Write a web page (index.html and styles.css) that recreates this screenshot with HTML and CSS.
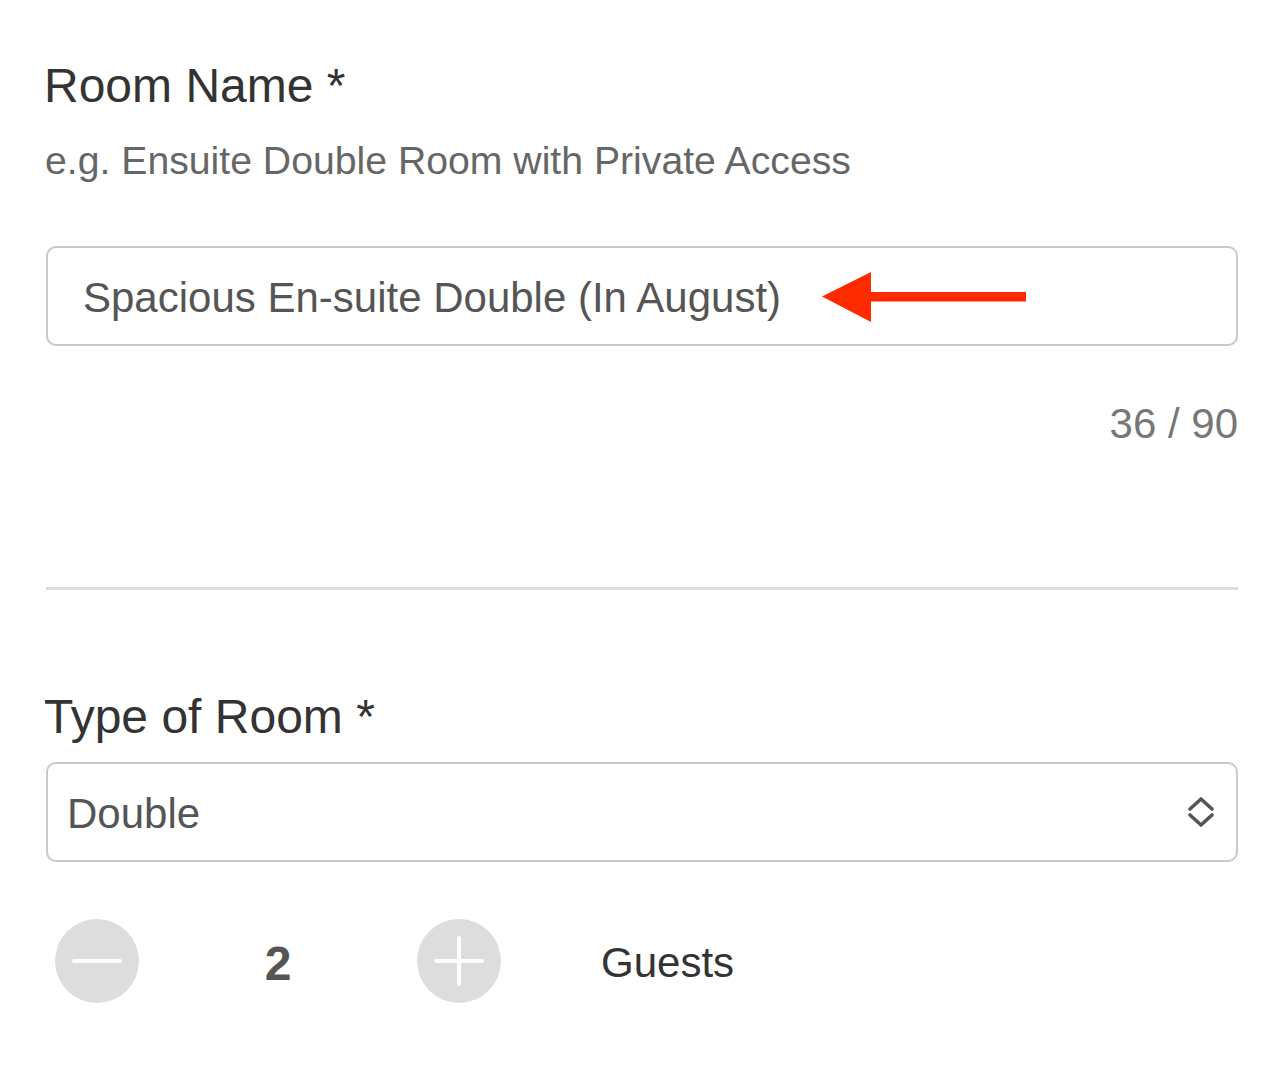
FILE: index.html
```html
<!DOCTYPE html>
<html lang="en">
<head>
<meta charset="utf-8">
<title>Room form</title>
<link rel="stylesheet" href="styles.css">
</head>
<body>
<main class="form">
  <section class="field">
    <div class="label">Room Name *</div>
    <div class="hint">e.g. Ensuite Double Room with Private Access</div>
    <div class="input-wrap">
      <div class="input">Spacious En-suite Double (In August)</div>
      <svg class="arrow" width="204" height="50" viewBox="0 0 204 50" aria-hidden="true">
        <polygon points="0,24.5 49,0 49,50" fill="#ff2a00"/>
        <rect x="48" y="20" width="156" height="9.5" fill="#ff2a00"/>
      </svg>
    </div>
    <div class="counter">36 / 90</div>
  </section>

  <hr class="divider">

  <section class="field">
    <div class="label label-type">Type of Room *</div>
    <div class="select">
      <span class="select-value">Double</span>
      <svg class="chevrons" width="28" height="32" viewBox="0 0 28 32" aria-hidden="true">
        <polyline points="3,13 14,3 25,13" fill="none" stroke="#555" stroke-width="3.6" stroke-linecap="round" stroke-linejoin="round"/>
        <polyline points="3,19 14,29 25,19" fill="none" stroke="#555" stroke-width="3.6" stroke-linecap="round" stroke-linejoin="round"/>
      </svg>
    </div>
    <div class="stepper">
      <div class="step-btn">
        <svg width="84" height="84" viewBox="0 0 84 84" aria-hidden="true">
          <line x1="19" y1="42" x2="65" y2="42" stroke="#fff" stroke-width="4" stroke-linecap="round"/>
        </svg>
      </div>
      <div class="step-value">2</div>
      <div class="step-btn">
        <svg width="84" height="84" viewBox="0 0 84 84" aria-hidden="true">
          <line x1="19" y1="42" x2="65" y2="42" stroke="#fff" stroke-width="4" stroke-linecap="round"/>
          <line x1="42" y1="19" x2="42" y2="65" stroke="#fff" stroke-width="4" stroke-linecap="round"/>
        </svg>
      </div>
      <div class="step-label">Guests</div>
    </div>
  </section>
</main>
</body>
</html>
```

FILE: styles.css
```css
html, body {
  margin: 0;
  padding: 0;
  background: #ffffff;
}

body {
  font-family: "Liberation Sans", Arial, Helvetica, sans-serif;
  color: #333;
}

.form {
  width: 1192px;
  padding: 58px 0 0 46px;
}

.field {
  display: flex;
  flex-direction: column;
}

.label {
  font-size: 48px;
  line-height: 56px;
  color: #333;
  margin-left: -2px;
}

.hint {
  font-size: 39.2px;
  line-height: 46px;
  color: #666;
  margin-top: 24px;
  margin-left: -1px;
}

.input-wrap {
  position: relative;
  margin-top: 62px;
}

.input {
  box-sizing: border-box;
  height: 100px;
  border: 2px solid #c9c9c9;
  border-radius: 10px;
  padding: 4px 0 0 35px;
  display: flex;
  align-items: center;
  font-size: 42px;
  color: #555;
}

.arrow {
  position: absolute;
  left: 776px;
  top: 26px;
}

.counter {
  align-self: flex-end;
  font-size: 42px;
  line-height: 50px;
  color: #777;
  margin-top: 53px;
}

.divider {
  border: 0;
  height: 3px;
  background: #dddddd;
  margin: 138px 0 0 0;
}

.label-type {
  margin-top: 99px;
}

.select {
  box-sizing: border-box;
  height: 100px;
  margin-top: 17px;
  border: 2px solid #c9c9c9;
  border-radius: 10px;
  padding: 0 21px 0 19px;
  display: flex;
  align-items: center;
  justify-content: space-between;
}

.select-value {
  font-size: 42px;
  color: #555;
  padding-top: 4px;
}

.chevrons {
  display: block;
}

.stepper {
  display: flex;
  align-items: center;
  margin-top: 57px;
  padding-left: 9px;
}

.step-btn {
  width: 84px;
  height: 84px;
  border-radius: 50%;
  background: #dddddd;
}

.step-btn svg {
  display: block;
}

.step-value {
  width: 278px;
  text-align: center;
  font-size: 48px;
  font-weight: bold;
  color: #555;
  padding-top: 4px;
}

.step-label {
  margin-left: 100px;
  font-size: 42px;
  color: #333;
  padding-top: 4px;
}
```
